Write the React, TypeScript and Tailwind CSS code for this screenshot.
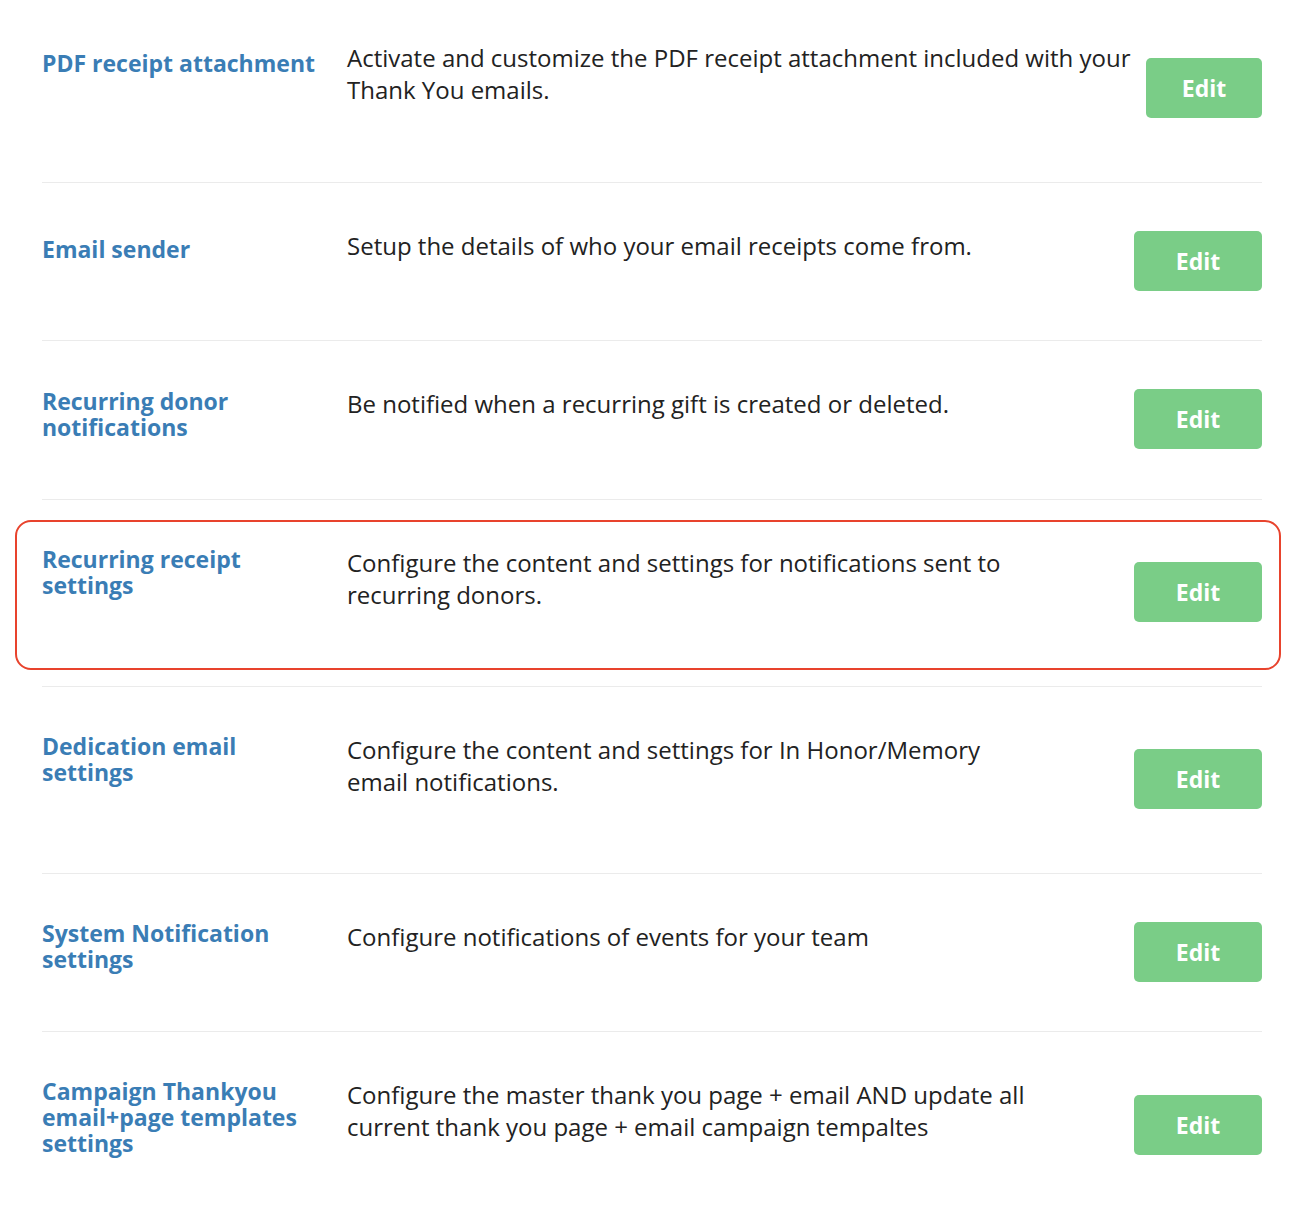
import React from "react";

type Row = {
  title: string[];
  desc: string[];
  rowCls: string;
  titleCls: string;
  descCls: string;
  btnCls: string;
  highlight?: boolean;
};

const rows: Row[] = [
  {
    title: ["PDF receipt attachment"],
    desc: [
      "Activate and customize the PDF receipt attachment included with your",
      "Thank You emails.",
    ],
    rowCls: "h-[182px]",
    titleCls: "pt-[50px]",
    descCls: "pt-[42px]",
    btnCls: "w-[116px] mt-[58px]",
  },
  {
    title: ["Email sender"],
    desc: ["Setup the details of who your email receipts come from."],
    rowCls: "h-[158px] border-t border-[#ebebeb]",
    titleCls: "pt-[53px]",
    descCls: "pt-[47px]",
    btnCls: "w-[128px] mt-[48px]",
  },
  {
    title: ["Recurring donor", "notifications"],
    desc: ["Be notified when a recurring gift is created or deleted."],
    rowCls: "h-[159px] border-t border-[#ebebeb]",
    titleCls: "pt-[47px]",
    descCls: "pt-[47px]",
    btnCls: "w-[128px] mt-[48px]",
  },
  {
    title: ["Recurring receipt", "settings"],
    desc: [
      "Configure the content and settings for notifications sent to",
      "recurring donors.",
    ],
    rowCls: "h-[187px] border-t border-[#ebebeb]",
    titleCls: "pt-[46px]",
    descCls: "pt-[47px]",
    btnCls: "w-[128px] mt-[62px]",
    highlight: true,
  },
  {
    title: ["Dedication email", "settings"],
    desc: [
      "Configure the content and settings for In Honor/Memory",
      "email notifications.",
    ],
    rowCls: "h-[187px] border-t border-[#ebebeb]",
    titleCls: "pt-[46px]",
    descCls: "pt-[47px]",
    btnCls: "w-[128px] mt-[62px]",
  },
  {
    title: ["System Notification", "settings"],
    desc: ["Configure notifications of events for your team"],
    rowCls: "h-[158px] border-t border-[#ebebeb]",
    titleCls: "pt-[46px]",
    descCls: "pt-[47px]",
    btnCls: "w-[128px] mt-[48px]",
  },
  {
    title: ["Campaign Thankyou", "email+page templates", "settings"],
    desc: [
      "Configure the master thank you page + email AND update all",
      "current thank you page + email campaign tempaltes",
    ],
    rowCls: "h-[179px] border-t border-[#ebebeb]",
    titleCls: "pt-[46px]",
    descCls: "pt-[47px]",
    btnCls: "w-[128px] mt-[63px]",
  },
];

export default function App() {
  return (
    <div className="w-[1298px] h-[1210px] overflow-hidden bg-white font-['Open_Sans',sans-serif]">
      <div className="ml-[42px] w-[1220px] flex flex-col">
        {rows.map((r, i) => (
          <div key={i} className={"relative flex items-start box-border " + r.rowCls}>
            {r.highlight && (
              <div className="absolute left-[-27px] right-[-19px] top-[20px] bottom-[16px] rounded-[16px] border-2 border-[#e8432d] pointer-events-none" />
            )}
            <div
              className={
                "w-[305px] shrink-0 text-[23px] leading-[26px] font-bold text-[#3a7db5] whitespace-nowrap " +
                r.titleCls
              }
            >
              {r.title.map((t, j) => (
                <div key={j}>{t}</div>
              ))}
            </div>
            <div
              className={
                "flex-1 min-w-0 text-[24px] leading-[32px] text-[#222222] whitespace-nowrap " +
                r.descCls
              }
            >
              {r.desc.map((t, j) => (
                <div key={j}>{t}</div>
              ))}
            </div>
            <button
              className={
                "shrink-0 h-[60px] rounded-[5px] bg-[#7acd87] text-white text-[23px] font-bold flex items-center justify-center " +
                r.btnCls
              }
            >
              Edit
            </button>
          </div>
        ))}
      </div>
    </div>
  );
}
